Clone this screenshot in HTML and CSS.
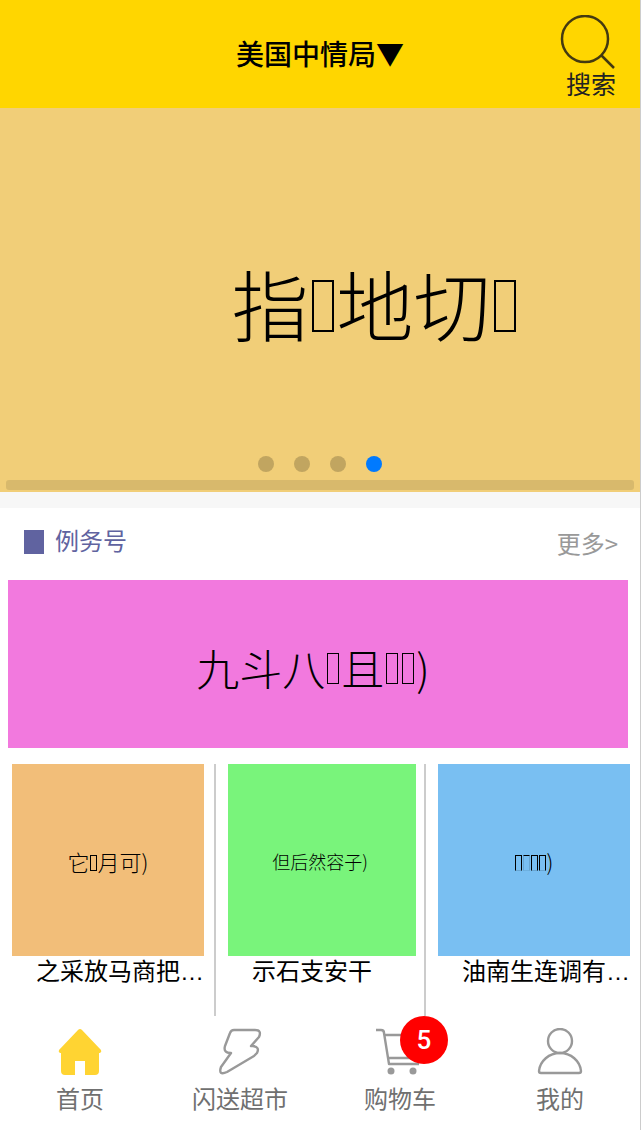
FILE: index.html
```html
<!DOCTYPE html>
<html lang="zh-CN">
<head>
<meta charset="utf-8">
<meta name="viewport" content="width=device-width, initial-scale=1">
<title>首页</title>
<link rel="stylesheet" href="styles.css">
</head>
<body>
<div class="app">
  <header class="header">
    <button class="address" type="button">美国中情局▼</button>
    <a class="search" href="#">
      <svg class="search-icon" viewBox="0 0 56 54" aria-hidden="true"><circle cx="25" cy="24" r="23"/><path d="M41 40 54 53"/></svg>
      <span>搜索</span>
    </a>
  </header>
  <main class="main">
    <section class="carousel">
      <div class="slide">指<i class="box"></i>地切<i class="box"></i></div>
      <div class="dots">
        <button class="dot" type="button" aria-label="1"></button>
        <button class="dot" type="button" aria-label="2"></button>
        <button class="dot" type="button" aria-label="3"></button>
        <button class="dot dot-active" type="button" aria-label="4"></button>
      </div>
      <div class="scrollbar"></div>
    </section>
    <section class="category">
      <div class="category-head">
        <h2 class="category-title">例务号</h2>
        <a class="more" href="#">更多&gt;</a>
      </div>
      <div class="promo">九斗八<i class="box"></i>且<i class="box"></i><i class="box"></i>)</div>
      <div class="goods">
        <article class="item">
          <div class="photo photo-orange">它<i class="box"></i>月可)</div>
          <p class="name">之采放马商把…</p>
        </article>
        <article class="item">
          <div class="photo photo-green">但后然容子)</div>
          <p class="name">示石支安干</p>
        </article>
        <article class="item">
          <div class="photo photo-blue"><i class="box"></i><i class="box box-faint"></i><i class="box"></i><i class="box"></i>)</div>
          <p class="name">油南生连调有…</p>
        </article>
      </div>
    </section>
  </main>
  <nav class="tabs">
    <a class="tab" href="#">
      <svg class="tab-icon" viewBox="0 0 48 48" aria-hidden="true"><path class="home" d="M24 1Q25 1 26 2L45 22Q46 24 44 25H43V43Q43 47 39 47H29V33H19V47H9Q5 47 5 43V25H4Q2 24 3 22L22 2Q23 1 24 1Z"/></svg>
      <span>首页</span>
    </a>
    <a class="tab" href="#">
      <svg class="tab-icon" viewBox="0 0 48 48" aria-hidden="true"><path d="M18 2H39Q46 2 43 9L35 18H37Q44 19 41 25L38 28L11 44Q2 48 5 39L15 25Q7 25 9 18L14 5Q15 2 18 2Z"/></svg>
      <span>闪送超市</span>
    </a>
    <a class="tab" href="#">
      <span class="cart">
        <svg class="tab-icon" viewBox="0 0 48 48" aria-hidden="true"><path d="M0 2H5Q8 2 8 5L13 36H43M9 7H45L40 30H12"/><circle class="wheel" cx="15" cy="43" r="3.5"/><circle class="wheel" cx="37" cy="43" r="3.5"/></svg>
        <span class="badge">5</span>
      </span>
      <span>购物车</span>
    </a>
    <a class="tab" href="#">
      <svg class="tab-icon" viewBox="0 0 48 48" aria-hidden="true"><circle cx="24" cy="13" r="12"/><path d="M24 25C13 25 4 33 3 43Q3 45 5 45H43Q45 45 45 43C44 33 35 25 24 25Z"/></svg>
      <span>我的</span>
    </a>
  </nav>
</div>
</body>
</html>
```
FILE: styles.css
```css
* { box-sizing: border-box; }
body {
  margin: 0;
  background: #fff;
  color: #000;
  font-family: "Liberation Sans", "Noto Sans CJK SC", sans-serif;
  font-size: 24px;
  line-height: 32px;
}
a { color: inherit; text-decoration: none; }
button { border: 0; padding: 0; background: none; color: inherit; font: inherit; }
svg { display: block; fill: none; }
h2, p { margin: 0; font-size: inherit; font-weight: 400; }

.app {
  display: flex;
  flex-direction: column;
  min-height: 100vh;
  margin-right: 1px;
  border-right: 1px solid #ccc;
}
.main { flex: 1; }

.header {
  display: grid;
  grid-template-columns: 1fr auto 1fr;
  align-items: center;
  height: 108px;
  background: #ffd600;
}
.address {
  grid-column: 2;
  padding-bottom: 2px;
  font-family: "Noto Sans CJK SC", sans-serif;
  font-size: 28px;
  font-weight: 500;
}
.search {
  justify-self: end;
  display: flex;
  flex-direction: column;
  align-items: flex-end;
  margin-right: 24px;
  padding-top: 8px;
  color: #222;
  font-size: 25px;
}
.search-icon { width: 56px; height: 54px; stroke: #443a10; stroke-width: 2.5; }

/* Placeholder pictures */
.slide, .promo, .photo {
  display: flex;
  align-items: center;
  justify-content: center;
  font-family: "Noto Sans CJK SC", sans-serif;
  font-weight: 300;
  line-height: 1;
}
.box { flex: none; border: 1px solid #000; }

.carousel {
  display: flex;
  flex-direction: column;
  height: 384px;
  padding: 0 6px 2px;
  background: #f1ce78;
}
.slide { flex: 1; padding: 40px 0 0 110px; font-size: 77px; }
.slide .box { width: 22px; height: 52px; margin: 8px 3px 0; border-width: 2px; }
.dots { display: flex; justify-content: center; gap: 20px; margin-bottom: 8px; }
.dot { width: 16px; height: 16px; border-radius: 50%; background: #c1a560; }
.dot-active { background: #007aff; }
.scrollbar { height: 10px; border-radius: 3px; background: #d8b96c; }

.category { border-top: 16px solid #f7f7f7; }
.category-head {
  display: flex;
  align-items: center;
  justify-content: space-between;
  height: 72px;
  padding: 0 22px 4px 24px;
}
.category-title { padding-left: 11px; border-left: 20px solid #6063a0; color: #6063a0; line-height: 24px; }
.more { padding-top: 2px; color: #999; font-family: "Noto Sans CJK SC", sans-serif; }
.promo { height: 168px; margin: 0 12px 16px 8px; padding: 6px 10px 0 0; background: #f279de; font-size: 43px; }
.promo .box { width: 12px; height: 31px; margin: 2px 2px 0; }

.goods { display: grid; grid-template-columns: 216fr 210fr 204fr; padding-right: 10px; }
.item { height: 252px; padding: 0 8px 0 12px; border-right: 2px solid #ccc; }
.item:first-child { padding-right: 10px; }
.item:last-child { padding-right: 0; border-right: 0; }
.photo { height: 192px; padding-top: 2px; font-size: 22px; }
.photo .box { width: 7px; height: 16px; margin: 3px 1px 0 0; }
.photo-orange { background: #f2be79; }
.photo-green { padding-right: 4px; background: #79f47b; font-size: 18px; }
.photo-blue { background: #79bff2; }
.photo-blue .box { border-bottom-color: #67a5d2; }
.photo .box-faint { border-color: #000 #67a5d2 #6db0e0; }
.name { padding-left: 24px; white-space: nowrap; }

.tabs { display: grid; grid-template-columns: repeat(4, 1fr); height: 114px; padding-top: 12px; color: #707070; }
.tab { display: flex; flex-direction: column; align-items: center; gap: 8px; }
.tab-icon { width: 48px; height: 48px; stroke: #999; stroke-width: 2.4; stroke-linejoin: round; }
.home { fill: #ffd432; stroke: none; }
.wheel { fill: #999; stroke: none; }
.cart { position: relative; }
.badge {
  position: absolute;
  top: -12px;
  left: 24px;
  width: 48px;
  border-radius: 50%;
  background: #f00;
  color: #fff;
  font-family: Roboto, sans-serif;
  font-size: 26px;
  font-weight: 500;
  line-height: 48px;
  text-align: center;
}
```
